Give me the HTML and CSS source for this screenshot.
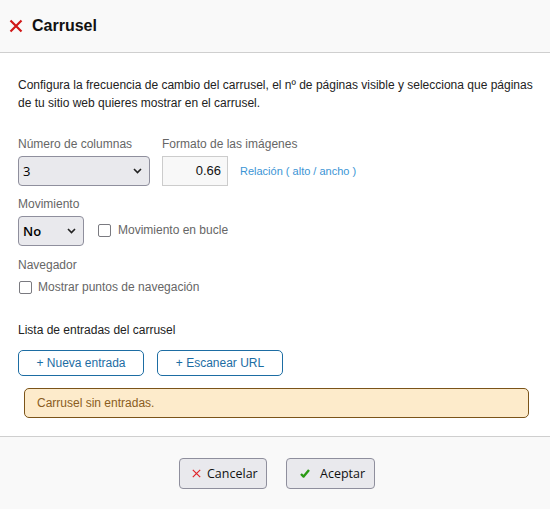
FILE: index.html
```html
<!DOCTYPE html>
<html lang="es">
<head>
<meta charset="utf-8">
<title>Carrusel</title>
<link rel="stylesheet" href="styles.css">
</head>
<body>
<div class="dialog">
  <header class="dlg-header">
    <svg class="close-icon" width="14" height="14" viewBox="0 0 14 14"><path d="M1.5 1.5 L12.5 12.5 M12.5 1.5 L1.5 12.5" stroke="#d01818" stroke-width="2.2" stroke-linecap="butt"/></svg>
    <h1 class="title">Carrusel</h1>
  </header>
  <main class="dlg-body">
    <p class="intro">Configura la frecuencia de cambio del carrusel, el nº de páginas visible y selecciona que páginas de tu sitio web quieres mostrar en el carrusel.</p>

    <div class="row">
      <div class="field">
        <label class="lbl">Número de columnas</label>
        <div class="select wide"><span>3</span><svg width="9" height="6" viewBox="0 0 9 6"><path d="M1 1 L4.5 4.5 L8 1" fill="none" stroke="#222" stroke-width="1.6"/></svg></div>
      </div>
      <div class="field">
        <label class="lbl">Formato de las imágenes</label>
        <div class="inline">
          <div class="num-input">0.66</div>
          <span class="hint">Relación ( alto / ancho )</span>
        </div>
      </div>
    </div>

    <div class="field mt">
      <label class="lbl">Movimiento</label>
      <div class="inline">
        <div class="select narrow"><span>No</span><svg width="9" height="6" viewBox="0 0 9 6"><path d="M1 1 L4.5 4.5 L8 1" fill="none" stroke="#222" stroke-width="1.6"/></svg></div>
        <label class="check"><span class="box"></span>Movimiento en bucle</label>
      </div>
    </div>

    <div class="field mt2">
      <label class="lbl">Navegador</label>
      <label class="check nav"><span class="box"></span>Mostrar puntos de navegación</label>
    </div>

    <h2 class="section">Lista de entradas del carrusel</h2>
    <div class="actions">
      <button class="btn-outline">+ Nueva entrada</button>
      <button class="btn-outline">+ Escanear URL</button>
    </div>
    <div class="alert">Carrusel sin entradas.</div>
  </main>
  <footer class="dlg-footer">
    <button class="btn cancel"><svg class="ico-x" width="9" height="9" viewBox="0 0 9 9"><path d="M0.8 0.8 L8.2 8.2 M8.2 0.8 L0.8 8.2" stroke="#e0242a" stroke-width="1.2"/></svg>Cancelar</button>
    <button class="btn accept"><svg class="ico-ok" width="10" height="9" viewBox="0 0 10 9"><path d="M1 5 L3.6 7.6 L9 1" fill="none" stroke="#2a9a14" stroke-width="2.4" stroke-linejoin="round"/></svg>Aceptar</button>
  </footer>
</div>
</body>
</html>
```
FILE: styles.css
```css
* { box-sizing: border-box; }
html, body { margin: 0; padding: 0; }
body {
  width: 550px;
  height: 509px;
  background: #fff;
  font-family: "Liberation Sans", Arial, sans-serif;
  color: #333;
  overflow: hidden;
}
.dialog { display: flex; flex-direction: column; height: 509px; }
.dlg-header {
  height: 53px;
  background: #f9f9f9;
  border-bottom: 1px solid #cfcfcf;
  display: flex;
  align-items: center;
  padding: 0 0 0 9px;
}
.title {
  margin: 0 0 0 9px;
  font-size: 16px;
  font-weight: bold;
  color: #111;
}
.dlg-body {
  flex: 1;
  padding: 23px 14px 0 18px;
}
.intro {
  margin: 0;
  font-size: 12px;
  line-height: 18px;
  color: #222;
}
.row { display: flex; gap: 12px; margin-top: 24px; }
.field { display: flex; flex-direction: column; }
.lbl { font-size: 12px; color: #666; line-height: 16px; margin-bottom: 4px; }
.mt { margin-top: 10px; }
.mt2 { margin-top: 11px; }
.inline { display: flex; align-items: center; }
.select {
  height: 30px;
  background: #e9e9ed;
  border: 1px solid #8f8f9d;
  border-radius: 4px;
  display: flex;
  align-items: center;
  justify-content: space-between;
  padding: 0 7px 0 4px;
  font-family: "Open Sans", sans-serif;
  font-size: 13px;
  color: #000;
}
.select.wide { width: 132px; }
.select.narrow { width: 66px; font-weight: 600; font-size: 13px; }
.num-input {
  width: 66px;
  height: 30px;
  background: #f8f8f8;
  border: 1px solid #ccc;
  text-align: right;
  padding: 0 6px;
  line-height: 28px;
  font-size: 13px;
  color: #111;
}
.hint { margin-left: 12px; color: #3b95d5; font-size: 11px; }
.check {
  display: flex;
  align-items: center;
  margin: -2px 0 0 14px;
  font-size: 12px;
  color: #666;
}
.box {
  width: 13px;
  height: 13px;
  border: 1.5px solid #7a7a80;
  border-radius: 2px;
  background: #fff;
  margin-right: 7px;
}
.check.nav { margin: 3px 0 0 1px; }
.check.nav .box { margin-right: 6px; }
.section {
  margin: 28px 0 0;
  font-size: 12px;
  font-weight: normal;
  color: #222;
  line-height: 16px;
}
.actions { display: flex; gap: 13px; margin-top: 12px; }
.btn-outline {
  width: 126px;
  height: 26px;
  background: #fff;
  border: 1px solid #1d6da3;
  border-radius: 5px;
  color: #1d6da3;
  font-family: "Liberation Sans", sans-serif;
  font-size: 12px;
  padding: 0;
}
.alert {
  margin: 12px 7px 0 6px;
  height: 30px;
  background: #fdebcb;
  border: 1px solid #7b5419;
  border-radius: 5px;
  color: #8a5d22;
  font-size: 12px;
  line-height: 28px;
  padding-left: 12px;
}
.dlg-footer {
  height: 73px;
  background: #f9f9f9;
  border-top: 1px solid #cfcfcf;
  display: flex;
  justify-content: center;
  align-items: flex-start;
  gap: 19px;
  padding: 21px 0 0 4px;
}
.btn {
  height: 31px;
  background: #e9e9ed;
  border: 1px solid #8f8f9d;
  border-radius: 4px;
  font-family: "Open Sans", sans-serif;
  font-size: 12.5px;
  color: #111;
  padding: 0 0 0 12px;
  display: flex;
  align-items: center;
}
.btn.cancel { width: 88px; }
.btn.accept { width: 89px; padding-left: 13px; }
.ico-x { margin-right: 6px; }
.ico-ok { margin-right: 10px; }
```
